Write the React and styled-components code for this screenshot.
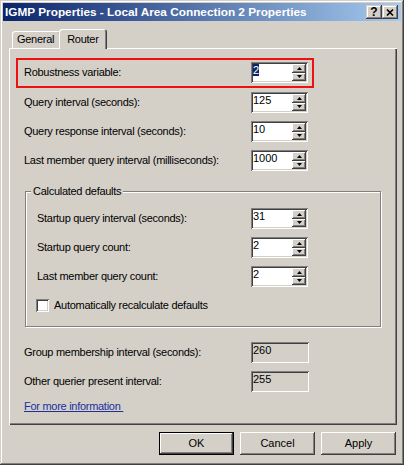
import React from 'react';
import styled, { createGlobalStyle } from 'styled-components';

const GlobalStyle = createGlobalStyle`
  html, body {
    margin: 0;
    padding: 0;
    background: #d4d0c8;
  }
  body {
    font-family: "Liberation Sans", Arial, sans-serif;
    font-size: 11px;
    line-height: 13px;
    letter-spacing: -0.28px;
    color: #000;
  }
  * {
    box-sizing: border-box;
  }
`;

const Window = styled.div`
  width: 404px;
  height: 465px;
  padding: 3px;
  display: flex;
  flex-direction: column;
  background: #d4d0c8;
  box-shadow: inset -1px -1px #404040, inset 1px 1px #d4d0c8, inset -2px -2px #808080,
    inset 2px 2px #ffffff;
`;

const TitleBar = styled.div`
  height: 18px;
  display: flex;
  align-items: center;
  padding: 0 3px 0 2px;
  background: linear-gradient(to right, #0a246a, #a6caf0);
`;

const Title = styled.div`
  flex: 1;
  color: #fff;
  font-weight: bold;
  font-size: 11.8px;
  letter-spacing: 0;
  white-space: nowrap;
`;

const CaptionButtons = styled.div`
  display: flex;
`;

const CaptionButton = styled.div`
  width: 16px;
  height: 14px;
  display: flex;
  align-items: center;
  justify-content: center;
  background: #d4d0c8;
  font-weight: bold;
  font-size: 12px;
  letter-spacing: 0;
  box-shadow: inset -1px -1px #404040, inset 1px 1px #d4d0c8, inset -2px -2px #808080,
    inset 2px 2px #ffffff;
`;

const Body = styled.div`
  flex: 1;
  display: flex;
  flex-direction: column;
  padding: 8px 4px 7px 6px;
`;

const TabStrip = styled.div`
  height: 19px;
  display: flex;
  align-items: flex-end;
  padding-left: 3px;
  position: relative;
  z-index: 1;
`;

const Tab = styled.div`
  height: ${p => (p.$active ? 20 : 17)}px;
  margin: 0 ${p => (p.$active ? -2 : 0)}px ${p => (p.$active ? -1 : 0)}px;
  padding: ${p => (p.$active ? '0 8px' : '0 7px 0 5px')};
  display: flex;
  align-items: center;
  background: #d4d0c8;
  border-radius: 3px 3px 0 0;
  box-shadow: inset 1px 1px #ffffff, inset -1px 0 #404040, inset -2px 0 #808080;
  position: relative;
  z-index: ${p => (p.$active ? 1 : 0)};
`;

const Panel = styled.div`
  flex: 1;
  display: flex;
  flex-direction: column;
  padding: 10px 16px 0 15px;
  box-shadow: inset 1px 1px #ffffff, inset -1px -1px #404040, inset -2px -2px #808080;
`;

const Callout = styled.div`
  margin: 0 67px 0 -8px;
  padding: 2px 4px 3px 6px;
  border: 2px solid #ee1111;
`;

const Row = styled.div`
  height: 21px;
  display: flex;
  align-items: center;
  justify-content: space-between;
  margin-top: ${p => p.$gap || 0}px;
  margin-right: ${p => p.$trail || 0}px;
`;

const Label = styled.span`
  white-space: nowrap;
`;

const Spin = styled.div`
  width: 57px;
  height: 21px;
  padding: 2px;
  display: flex;
  background: #fff;
  box-shadow: inset 1px 1px #808080, inset -1px -1px #ffffff, inset 2px 2px #404040,
    inset -2px -2px #d4d0c8;
`;

const ReadOnly = styled(Spin)`
  width: 58px;
  background: #d4d0c8;
`;

const Value = styled.div`
  flex: 1;
  line-height: 13px;
  letter-spacing: 0;
`;

const Selected = styled.span`
  background: #0a246a;
  color: #fff;
`;

const Arrows = styled.div`
  width: 14px;
  display: flex;
  flex-direction: column;
`;

const Arrow = styled.div`
  flex: 1;
  display: flex;
  align-items: center;
  justify-content: center;
  background: #d4d0c8;
  box-shadow: inset -1px -1px #404040, inset 1px 1px #ffffff, inset -2px -2px #808080;
`;

const Group = styled.div`
  margin: 20px 0 0 1px;
  padding: 0 72px 14px 11px;
  display: flex;
  flex-direction: column;
  border: 1px solid #808080;
  box-shadow: inset 1px 1px #ffffff, 1px 1px #ffffff;
`;

const GroupTitle = styled.span`
  align-self: flex-start;
  margin: -7px 0 0 -6px;
  padding: 0 2px;
  background: #d4d0c8;
`;

const CheckRow = styled.label`
  height: 13px;
  display: flex;
  align-items: center;
  gap: 5px;
  margin: 12px 0 0 -1px;
`;

const CheckBox = styled.span`
  width: 13px;
  height: 13px;
  background: #fff;
  box-shadow: inset 1px 1px #808080, inset -1px -1px #ffffff, inset 2px 2px #404040,
    inset -2px -2px #d4d0c8;
`;

const MoreLink = styled.a`
  align-self: flex-start;
  margin-top: 8px;
  color: #1c2f9e;
  text-decoration: underline;
  cursor: pointer;
`;

const ButtonBar = styled.div`
  display: flex;
  justify-content: flex-end;
  gap: 6px;
  margin: 7px 1px 0 0;
`;

const Button = styled.button`
  width: 75px;
  height: 23px;
  padding: 0;
  border: none;
  font: inherit;
  color: #000;
  background: #d4d0c8;
  box-shadow: ${p =>
    p.$default
      ? 'inset 0 0 0 1px #000, inset -2px -2px #404040, inset 2px 2px #ffffff, inset -3px -3px #808080'
      : 'inset -1px -1px #404040, inset 1px 1px #ffffff, inset -2px -2px #808080'};
`;

function Triangle({ down }) {
  return (
    <svg width="5" height="3" viewBox="0 0 5 3">
      <polygon points={down ? '0,0 5,0 2.5,3' : '2.5,0 5,3 0,3'} fill="#000" />
    </svg>
  );
}

function SpinBox({ value, selected }) {
  return (
    <Spin>
      <Value>{selected ? <Selected>{value}</Selected> : value}</Value>
      <Arrows>
        <Arrow>
          <Triangle />
        </Arrow>
        <Arrow>
          <Triangle down />
        </Arrow>
      </Arrows>
    </Spin>
  );
}

const mainRows = [
  { label: 'Query interval (seconds):', value: '125', gap: 4 },
  { label: 'Query response interval (seconds):', value: '10', gap: 8 },
  { label: 'Last member query interval (milliseconds):', value: '1000', gap: 8 },
];

const groupRows = [
  { label: 'Startup query interval (seconds):', value: '31', gap: 10 },
  { label: 'Startup query count:', value: '2', gap: 8 },
  { label: 'Last member query count:', value: '2', gap: 8 },
];

const readRows = [
  { label: 'Group membership interval (seconds):', value: '260', gap: 15 },
  { label: 'Other querier present interval:', value: '255', gap: 8 },
];

export default function App() {
  return (
    <>
      <GlobalStyle />
      <Window>
        <TitleBar>
          <Title>IGMP Properties - Local Area Connection 2 Properties</Title>
          <CaptionButtons>
            <CaptionButton>?</CaptionButton>
            <CaptionButton>
              <svg width="8" height="7" viewBox="0 0 8 7">
                <path d="M1 0.5 L7 6.5 M7 0.5 L1 6.5" stroke="#000" strokeWidth="1.6" fill="none" />
              </svg>
            </CaptionButton>
          </CaptionButtons>
        </TitleBar>
        <Body>
          <TabStrip>
            <Tab>General</Tab>
            <Tab $active>Router</Tab>
          </TabStrip>
          <Panel>
            <Callout>
              <Row>
                <Label>Robustness variable:</Label>
                <SpinBox value="2" selected />
              </Row>
            </Callout>
            {mainRows.map(r => (
              <Row key={r.label} $gap={r.gap} $trail={73}>
                <Label>{r.label}</Label>
                <SpinBox value={r.value} />
              </Row>
            ))}
            <Group>
              <GroupTitle>Calculated defaults</GroupTitle>
              {groupRows.map(r => (
                <Row key={r.label} $gap={r.gap}>
                  <Label>{r.label}</Label>
                  <SpinBox value={r.value} />
                </Row>
              ))}
              <CheckRow>
                <CheckBox />
                Automatically recalculate defaults
              </CheckRow>
            </Group>
            {readRows.map(r => (
              <Row key={r.label} $gap={r.gap} $trail={72}>
                <Label>{r.label}</Label>
                <ReadOnly>
                  <Value>{r.value}</Value>
                </ReadOnly>
              </Row>
            ))}
            <MoreLink>For more information&nbsp;</MoreLink>
          </Panel>
          <ButtonBar>
            <Button $default>OK</Button>
            <Button>Cancel</Button>
            <Button>Apply</Button>
          </ButtonBar>
        </Body>
      </Window>
    </>
  );
}
